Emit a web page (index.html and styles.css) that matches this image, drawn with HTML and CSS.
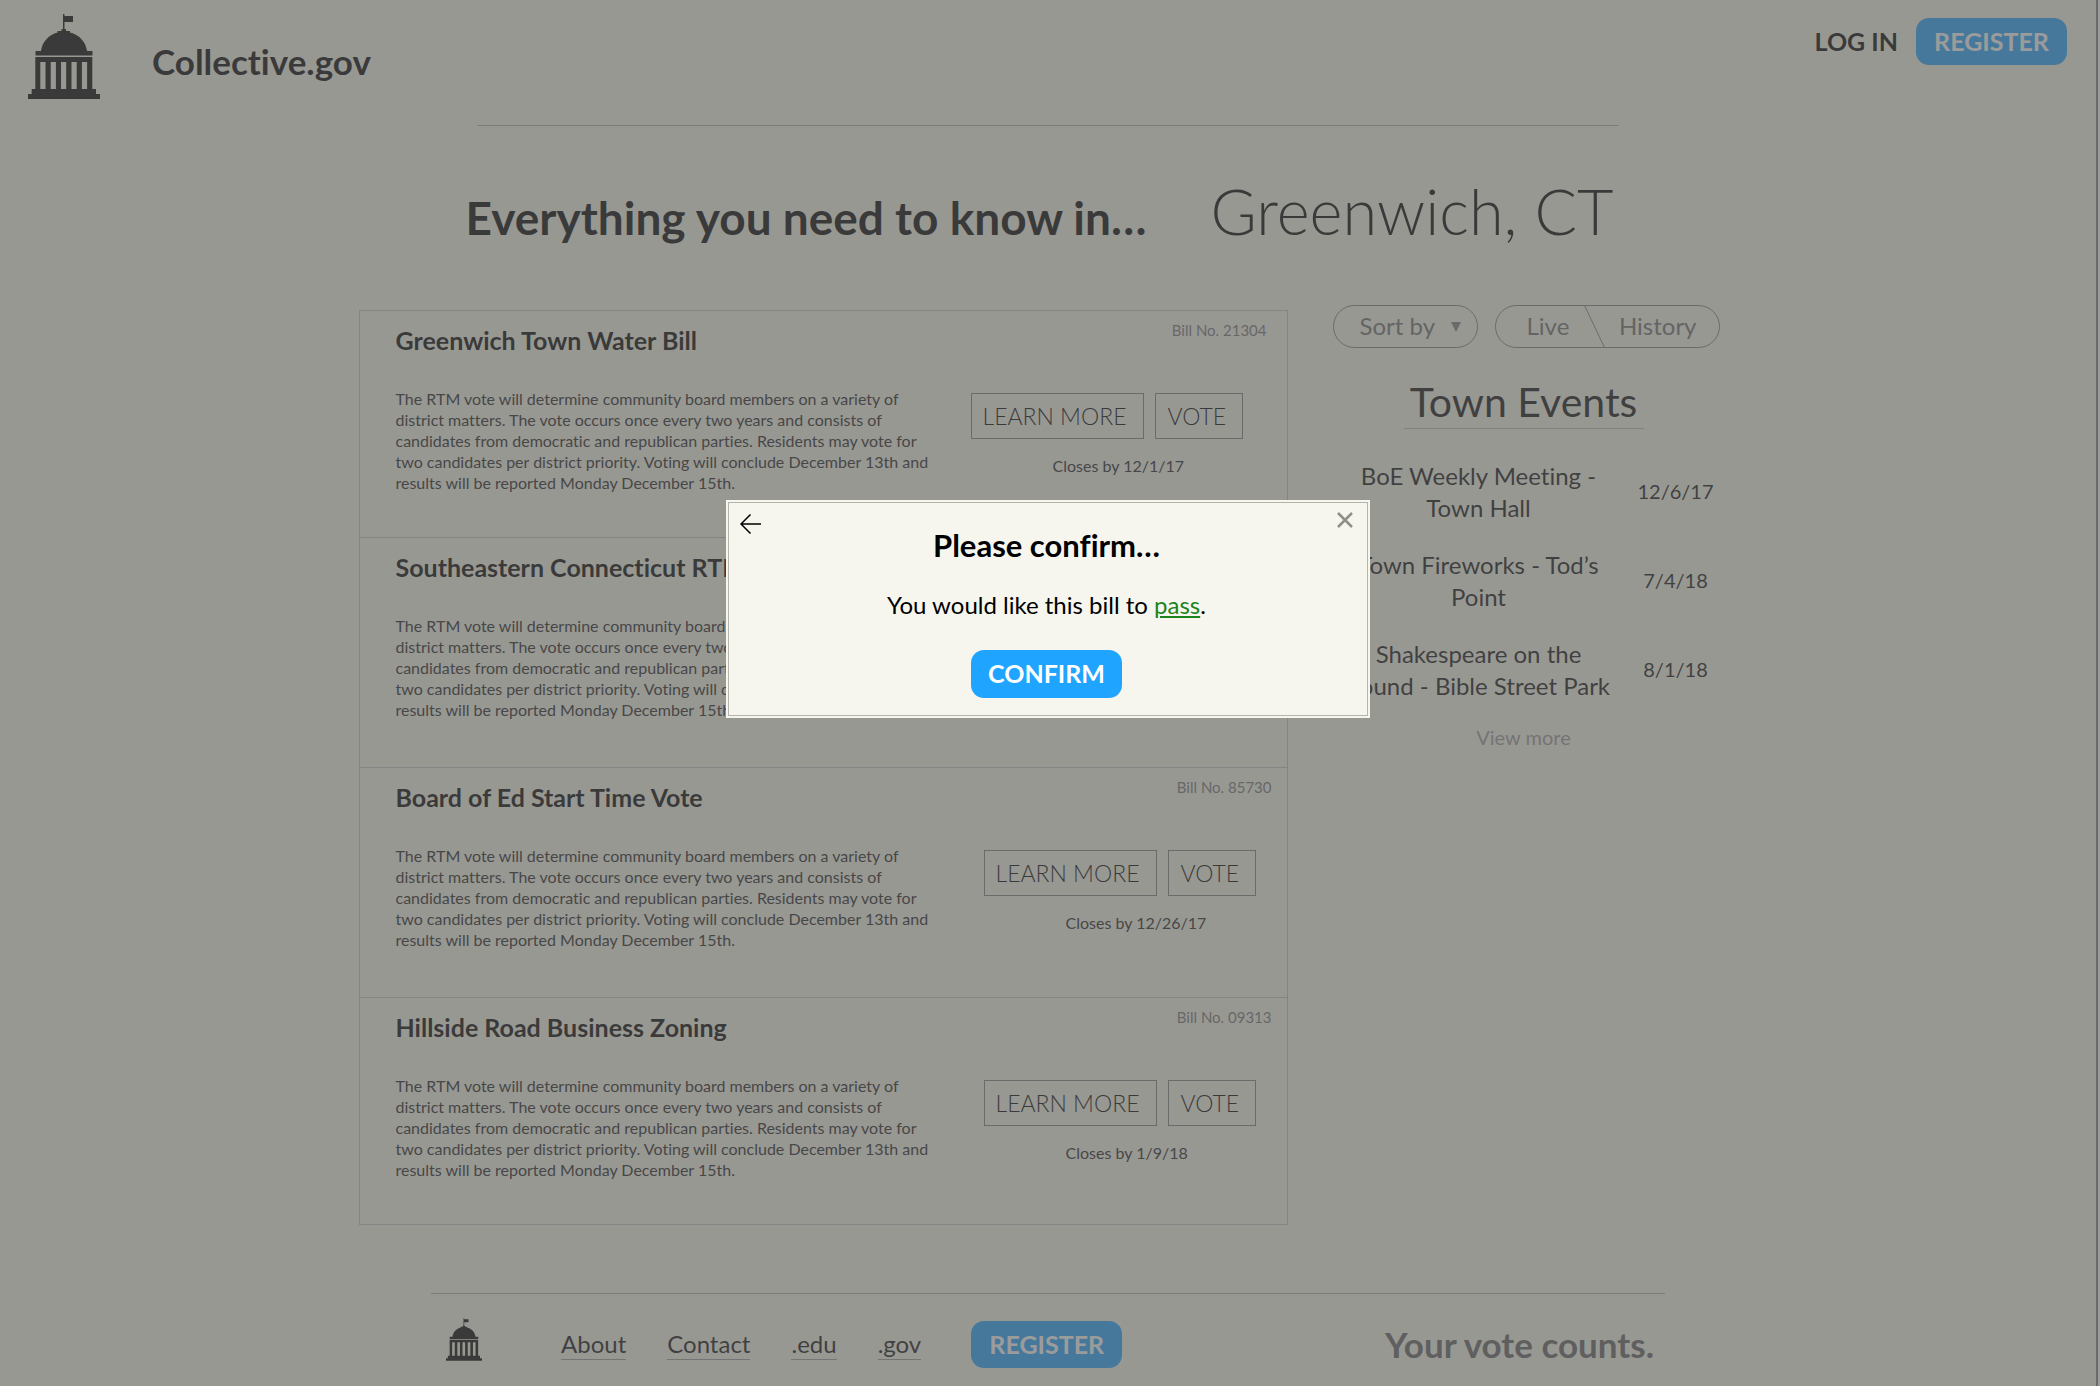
FILE: index.html
```html
<!DOCTYPE html>
<html lang="en">
<head>
    <title>Collective.gov</title>
    <meta charset="UTF-8">
    <link rel="stylesheet" href="styles.css">
</head>
<body>
    <svg class="sprite" aria-hidden="true">
        <symbol id="capitol" viewBox="0 0 72 85">
            <path d="M35 0h1.500v2H45v6h-8.500v7H38v2h4v1.500C51 20.500 58 28 59 37h5.500v4.500h-57V37H13C14 28 21 20.500 29.500 18.500V17h4v-2H35z"/>
            <path d="M7.300 43h57v32H68v5h4v5H0v-5h3.700v-5h3.600zM12.300 48v27h5.200V48zM22.700 48v27h5.200V48zM33 48v27h5.200V48zM43.500 48v27h5.200V48zM53.900 48v27h5.200V48z" fill-rule="evenodd"/>
        </symbol>
    </svg>

    <div class="page">
        <header class="header">
            <svg class="logo"><use href="#capitol"/></svg>
            <div class="site-name">Collective.gov</div>
            <nav class="account">
                <a href="#" class="login">LOG IN</a>
                <button type="button" class="btn">REGISTER</button>
            </nav>
        </header>
        <hr class="rule header-rule">

        <div class="headline">
            <h1>Everything you need to know in…</h1>
            <div class="city">Greenwich, CT</div>
        </div>

        <main class="content">
            <section class="bills">
                <article class="bill bill-first">
                    <div class="bill-text">
                        <h2>Greenwich Town Water Bill</h2>
                        <p>The RTM vote will determine community board members on a variety of<br>district matters. The vote occurs once every two years and consists of<br>candidates from democratic and republican parties. Residents may vote for<br>two candidates per district priority. Voting will conclude December 13th and<br>results will be reported Monday December 15th.</p>
                    </div>
                    <div class="bill-side">
                        <div class="bill-number">Bill No. 21304</div>
                        <div class="bill-actions">
                            <button type="button" class="box-btn learn">LEARN MORE</button>
                            <button type="button" class="box-btn vote">VOTE</button>
                        </div>
                        <div class="closes">Closes by 12/1/17</div>
                    </div>
                </article>
                <article class="bill">
                    <div class="bill-text">
                        <h2>Southeastern Connecticut RTM</h2>
                        <p>The RTM vote will determine community board members on a variety of<br>district matters. The vote occurs once every two years and consists of<br>candidates from democratic and republican parties. Residents may vote for<br>two candidates per district priority. Voting will conclude December 13th and<br>results will be reported Monday December 15th.</p>
                    </div>
                </article>
                <article class="bill">
                    <div class="bill-text">
                        <h2>Board of Ed Start Time Vote</h2>
                        <p>The RTM vote will determine community board members on a variety of<br>district matters. The vote occurs once every two years and consists of<br>candidates from democratic and republican parties. Residents may vote for<br>two candidates per district priority. Voting will conclude December 13th and<br>results will be reported Monday December 15th.</p>
                    </div>
                    <div class="bill-side">
                        <div class="bill-number">Bill No. 85730</div>
                        <div class="bill-actions">
                            <button type="button" class="box-btn learn">LEARN MORE</button>
                            <button type="button" class="box-btn vote">VOTE</button>
                        </div>
                        <div class="closes">Closes by 12/26/17</div>
                    </div>
                </article>
                <article class="bill bill-last">
                    <div class="bill-text">
                        <h2>Hillside Road Business Zoning</h2>
                        <p>The RTM vote will determine community board members on a variety of<br>district matters. The vote occurs once every two years and consists of<br>candidates from democratic and republican parties. Residents may vote for<br>two candidates per district priority. Voting will conclude December 13th and<br>results will be reported Monday December 15th.</p>
                    </div>
                    <div class="bill-side">
                        <div class="bill-number">Bill No. 09313</div>
                        <div class="bill-actions">
                            <button type="button" class="box-btn learn">LEARN MORE</button>
                            <button type="button" class="box-btn vote">VOTE</button>
                        </div>
                        <div class="closes">Closes by 1/9/18</div>
                    </div>
                </article>
            </section>

            <aside class="sidebar">
                <div class="filters">
                    <div class="pill sort">
                        <select aria-label="Sort by">
                            <option>Sort by</option>
                        </select>
                        <svg class="caret" viewBox="0 0 10 10"><path d="M0 0h10L5 10z"/></svg>
                    </div>
                    <div class="pill toggle">
                        <button type="button">Live</button>
                        <svg class="slash" viewBox="0 0 21 42"><path d="M0.500 0L20.500 42"/></svg>
                        <button type="button">History</button>
                    </div>
                </div>
                <h2 class="events-title">Town Events</h2>
                <ul class="events">
                    <li>
                        <span class="event-name">BoE Weekly Meeting -<br>Town Hall</span>
                        <span class="event-date">12/6/17</span>
                    </li>
                    <li>
                        <span class="event-name">Town Fireworks - Tod’s<br>Point</span>
                        <span class="event-date">7/4/18</span>
                    </li>
                    <li>
                        <span class="event-name">Shakespeare on the<br>Sound - Bible Street Park</span>
                        <span class="event-date">8/1/18</span>
                    </li>
                </ul>
                <a href="#" class="view-more">View more</a>
            </aside>
        </main>

        <footer class="footer">
            <hr class="rule">
            <div class="footer-row">
                <svg class="footer-logo"><use href="#capitol"/></svg>
                <nav class="footer-links">
                    <a href="#">About</a>
                    <a href="#">Contact</a>
                    <a href="#">.edu</a>
                    <a href="#">.gov</a>
                </nav>
                <button type="button" class="btn">REGISTER</button>
                <div class="tagline">Your vote counts.</div>
            </div>
        </footer>
    </div>

    <div class="overlay">
        <div class="modal" role="dialog" aria-labelledby="modal-title">
            <div class="modal-bar">
                <button type="button" class="icon-btn back" aria-label="Back">
                    <svg viewBox="0 0 21 20"><path d="M10.500 0.500L1 10l9.500 9.500M1 10h20"/></svg>
                </button>
                <button type="button" class="icon-btn close" aria-label="Close">
                    <svg viewBox="0 0 16 16"><path d="M1 1l14 14M15 1L1 15"/></svg>
                </button>
            </div>
            <h2 id="modal-title">Please confirm…</h2>
            <p>You would like this bill to <a href="#">pass</a>.</p>
            <button type="button" class="btn confirm">CONFIRM</button>
        </div>
    </div>
</body>
</html>
```

FILE: styles.css
```css
* {
    box-sizing: border-box;
}
body {
    margin: 0;
    background: #fff;
    color: #000;
    font-family: Lato, "Open Sans", sans-serif;
    font-size: 24px;
    line-height: 32px;
    font-variant-ligatures: none;
}
h1, h2, p, ul {
    margin: 0;
    padding: 0;
}
a {
    color: inherit;
    text-decoration: none;
}
button, select {
    font: inherit;
    color: inherit;
    background: none;
    border: none;
    padding: 0;
    cursor: pointer;
}
.sprite {
    position: absolute;
    width: 0;
    height: 0;
}
.page {
    min-height: 100vh;
    margin-right: 2px;
    border-right: 2px solid #808080;
    background: #f6f6ea;
}
.rule {
    height: 1px;
    margin: 0 auto;
    border: none;
    background: #adadad;
}
.btn {
    width: 151px;
    height: 47px;
    padding-bottom: 2px;
    border-radius: 13px;
    background: #1fa4ff;
    color: #fff;
    font-size: 25px;
    font-weight: bold;
}

/* header */
.header {
    display: flex;
    align-items: flex-start;
    padding: 14px 29px 0 28px;
}
.logo {
    width: 72px;
    height: 85px;
}
.site-name {
    margin: 27px 0 0 52px;
    font-size: 35px;
    font-weight: bold;
    line-height: 40px;
}
.account {
    display: flex;
    align-items: center;
    gap: 18px;
    margin: 4px 0 0 auto;
}
.login {
    padding-bottom: 2px;
    font-size: 25px;
    font-weight: bold;
}
.header-rule {
    width: 1142px;
    margin-top: 26px;
}
.headline {
    display: flex;
    justify-content: center;
    align-items: baseline;
    gap: 64px;
    margin-top: 49px;
    padding-right: 17px;
}
.headline h1 {
    font-size: 46px;
}
.city {
    font-size: 63px;
    font-weight: 300;
    line-height: 72px;
}

/* bills */
.content {
    display: flex;
    justify-content: center;
    align-items: flex-start;
    gap: 45px;
    margin-top: 58px;
    padding-right: 18px;
}
.bills {
    width: 929px;
    margin-top: 5px;
    border: 1px solid #c3c3c3;
    border-top: none;
}
.bill {
    display: flex;
    justify-content: space-between;
    padding: 0 15px 47px 36px;
    border-top: 1px solid #c3c3c3;
}
.bill-first,
.bill-last {
    padding-bottom: 44px;
}
.bill-first {
    padding-right: 20px;
}
.bill-text h2 {
    margin-top: 15px;
    font-size: 25px;
    line-height: 28px;
}
.bill-text p {
    margin-top: 34px;
    color: #222;
    font-size: 16px;
    line-height: 21px;
}
.bill-side {
    width: 288px;
    padding-top: 9px;
    font-size: 16px;
    line-height: 20px;
}
.bill-first .bill-side {
    width: 296px;
}
.bill-number {
    color: #777;
    font-size: 15px;
    text-align: right;
}
.bill-actions {
    display: flex;
    gap: 11px;
    margin-top: 53px;
}
.box-btn {
    height: 46px;
    border: 1px solid #808080;
    font-size: 23px;
    font-weight: 300;
    text-align: left;
}
.learn {
    width: 173px;
    padding-left: 11px;
}
.vote {
    width: 88px;
    padding-left: 12px;
}
.closes {
    margin: 17px 0 0 82px;
    color: #222;
}

/* sidebar */
.sidebar {
    width: 387px;
    color: #111;
}
.filters {
    display: flex;
    justify-content: space-between;
    color: #707070;
}
.pill {
    display: flex;
    align-items: center;
    height: 43px;
    border: 1px solid #808080;
    border-radius: 22px;
}
.sort {
    position: relative;
    width: 145px;
}
.sort select {
    width: 100%;
    padding-left: 26px;
    padding-bottom: 2px;
    appearance: none;
}
.caret {
    position: absolute;
    right: 16px;
    width: 10px;
    height: 10px;
    fill: #808080;
    pointer-events: none;
}
.toggle {
    width: 225px;
    padding: 0 22px 0 31px;
    justify-content: space-between;
}
.toggle button {
    padding-bottom: 2px;
}
.slash {
    width: 21px;
    height: 41px;
    fill: none;
    stroke: #808080;
}
.events-title {
    width: 240px;
    margin: 30px auto 0 71px;
    padding-bottom: 2px;
    border-bottom: 1px solid #b8b8b8;
    font-size: 41px;
    font-weight: 400;
    line-height: 48px;
    text-align: center;
}
.events {
    display: flex;
    flex-direction: column;
    gap: 25px;
    margin: 31px -7px 0 0;
    list-style: none;
}
.events li {
    display: flex;
    align-items: center;
    text-align: center;
}
.event-name {
    flex: 0 0 292px;
}
.event-date {
    flex: 1;
    padding-bottom: 2px;
    font-size: 20px;
}
.view-more {
    display: block;
    margin-top: 19px;
    padding-right: 5px;
    color: #999;
    font-size: 20px;
    text-align: center;
}

/* footer */
.footer {
    width: 1234px;
    margin: 68px auto 0;
}
.footer-row {
    display: flex;
    align-items: center;
    padding: 24px 11px 0 15px;
}
.footer-logo {
    width: 36px;
    height: 43px;
    margin-bottom: 10px;
}
.footer-links {
    display: flex;
    gap: 41px;
    margin: 0 50px 0 79px;
    color: #111;
}
.footer-links a {
    border-bottom: 1px solid #999;
    line-height: 30px;
}
.tagline {
    margin-left: auto;
    padding-bottom: 2px;
    color: #616161;
    font-size: 35px;
    font-weight: bold;
}

/* confirm dialog */
.overlay {
    position: fixed;
    inset: 0;
    display: flex;
    justify-content: center;
    align-items: flex-start;
    padding: 500px 4px 0 0;
    background: rgba(94, 94, 94, 0.62);
}
.modal {
    width: 644px;
    padding: 12px 17px 20px 14px;
    background: #f6f6ee;
    outline: 1px solid #b4b4aa;
    outline-offset: -3px;
    text-align: center;
}
.modal-bar {
    display: flex;
    justify-content: space-between;
    height: 15px;
}
.icon-btn {
    align-self: flex-start;
}
.icon-btn svg {
    display: block;
    fill: none;
}
.back svg {
    width: 21px;
    height: 20px;
    margin-top: 2px;
    stroke: #000;
    stroke-width: 1.5;
}
.close svg {
    width: 16px;
    height: 16px;
    stroke: #8e8e8a;
    stroke-width: 2.5;
}
.modal h2 {
    font-size: 31px;
    line-height: 36px;
}
.modal p {
    margin-top: 26px;
}
.modal p a {
    color: #1c841c;
    text-decoration: underline;
}
.confirm {
    height: 48px;
    margin-top: 29px;
}
```
